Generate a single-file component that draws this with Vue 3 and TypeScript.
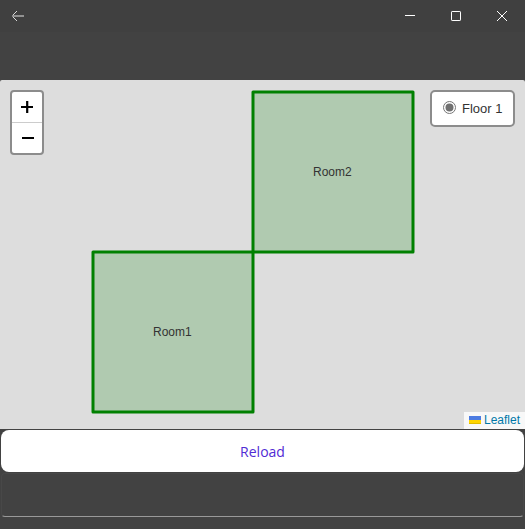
<script setup lang="ts">
import { ref } from 'vue'

interface Room {
  name: string
  x: number
  y: number
  size: number
}

const rooms: Room[] = [
  { name: 'Room1', x: 93, y: 172, size: 160 },
  { name: 'Room2', x: 253, y: 12, size: 160 },
]
const floors: string[] = ['Floor 1']
const selected = ref(floors[0])
</script>

<template>
  <div class="window">
    <header class="titlebar">
      <button class="back" aria-label="Back">
        <svg width="14" height="12" viewBox="0 0 14 12">
          <path d="M6 1L1 6l5 5" fill="none" stroke="#d8d8d8" />
          <path d="M1 6h12" stroke="#929292" stroke-width="2" />
        </svg>
      </button>
      <button class="control" aria-label="Minimize">
        <svg width="12" height="12" viewBox="0 0 12 12"><path d="M1 5.5h10" stroke="#fff" /></svg>
      </button>
      <button class="control" aria-label="Maximize">
        <svg width="12" height="12" viewBox="0 0 12 12"><rect x="1.5" y="1.5" width="9" height="9" rx=".6" fill="none" stroke="#fff" /></svg>
      </button>
      <button class="control" aria-label="Close">
        <svg width="12" height="12" viewBox="0 0 12 12"><path d="M1 1l10 10M11 1L1 11" stroke="#fff" /></svg>
      </button>
    </header>
    <div class="toolbar"></div>
    <main class="map">
      <svg class="rooms" width="525" height="349" viewBox="0 0 525 349">
        <g v-for="room in rooms" :key="room.name">
          <rect class="room" :x="room.x" :y="room.y" :width="room.size" :height="room.size" />
          <text class="label" :x="room.x + 60" :y="room.y + 84">{{ room.name }}</text>
        </g>
      </svg>
      <div class="zoom">
        <button aria-label="Zoom in"><svg width="14" height="14" viewBox="0 0 14 14"><path d="M1 7h12M7.2 1v12" stroke="#000" stroke-width="2.2" /></svg></button>
        <button aria-label="Zoom out"><svg width="14" height="14" viewBox="0 0 14 14"><path d="M2 7h12" stroke="#000" stroke-width="2" /></svg></button>
      </div>
      <div class="layers">
        <label v-for="floor in floors" :key="floor" @click="selected = floor">
          <svg width="13" height="13" viewBox="0 0 13 13">
            <circle cx="6.5" cy="6.5" r="6" fill="#fff" stroke="#767676" />
            <circle v-if="selected === floor" cx="6.5" cy="6.5" r="4" fill="#707070" />
          </svg>
          <span>{{ floor }}</span>
        </label>
      </div>
      <div class="attribution">
        <svg width="12" height="8" viewBox="0 0 12 8"><path fill="#4c7be1" d="M0 0h12v4H0z" /><path fill="#ffd500" d="M0 4h12v3H0z" /><path fill="#e0bc00" d="M0 7h12v1H0z" /></svg>
        <span>Leaflet</span>
      </div>
    </main>
    <footer class="actions">
      <button class="reload">Reload</button>
      <div class="entry"></div>
    </footer>
  </div>
</template>

<style>
body {
  margin: 0;
}
</style>

<style scoped>
.window {
  display: flex;
  flex-direction: column;
  height: 529px;
  background: #424242;
  overflow: hidden;
}
button {
  padding: 0;
  border: 0;
  background: none;
}
svg {
  display: block;
}
.titlebar {
  display: flex;
  height: 32px;
  background: #404040;
}
.back {
  margin-right: auto;
  padding-left: 11px;
}
.control {
  display: flex;
  align-items: center;
  justify-content: center;
  width: 46px;
}
.toolbar {
  height: 48px;
}
.map {
  position: relative;
  height: 349px;
  background: #ddd;
  border-radius: 2px 2px 0 0;
  font: 12px/18px "Liberation Sans", Arial, sans-serif;
}
.room {
  fill: rgba(0, 128, 0, 0.2);
  stroke: #008000;
  stroke-width: 3;
  stroke-linejoin: round;
}
.label {
  fill: #333;
}
.zoom,
.layers {
  position: absolute;
  top: 10px;
  box-sizing: border-box;
  border: 2px solid #8c8c8c;
  background: #fff;
}
.zoom {
  left: 10px;
  width: 34px;
  height: 65px;
  border-radius: 4px;
}
.zoom button {
  display: flex;
  align-items: center;
  justify-content: center;
  width: 30px;
  height: 30px;
}
.zoom button:first-child {
  height: 31px;
  border-bottom: 1px solid #ccc;
}
.layers {
  right: 10px;
  width: 85px;
  height: 37px;
  border-radius: 5px;
  padding: 8px 0 0 11px;
  color: #333;
  font-size: 13px;
}
.layers label {
  display: flex;
  gap: 6px;
}
.layers svg {
  margin-top: 1px;
  overflow: visible;
}
.attribution {
  position: absolute;
  right: 0;
  bottom: 0;
  display: flex;
  align-items: center;
  gap: 3px;
  box-sizing: border-box;
  width: 61px;
  height: 17px;
  padding: 0 0 2px 5px;
  background: #f8f8f8;
  color: #0078a8;
}
.actions {
  padding: 1px 1px 0;
}
.reload {
  display: block;
  width: 100%;
  height: 42px;
  padding-top: 2px;
  border-radius: 8px;
  background: #fff;
  color: #512bd4;
  font: 14px/40px "Open Sans", sans-serif;
}
.entry {
  box-sizing: border-box;
  height: 44px;
  margin-top: 1px;
  border: 1px solid #484848;
  border-bottom-color: #999;
  border-radius: 4px;
}
</style>
